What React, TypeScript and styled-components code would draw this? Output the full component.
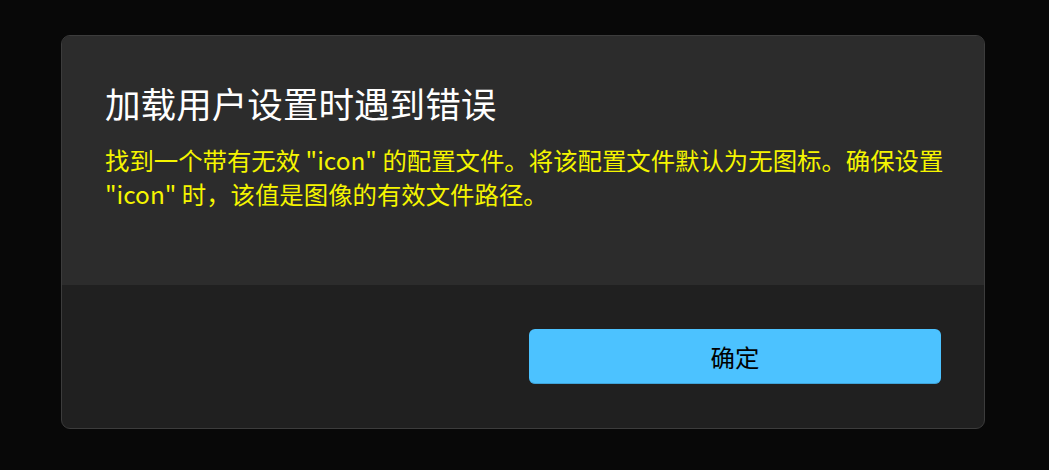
import styled, { createGlobalStyle } from "styled-components";

const GlobalStyle = createGlobalStyle`
  html, body {
    margin: 0;
    padding: 0;
    background: #080808;
  }
  body {
    font-family: "Noto Sans CJK SC", "Noto Sans", sans-serif;
  }
`;

const Page = styled.div`
  width: 1049px;
  height: 470px;
  padding: 35px 0 0 61px;
  box-sizing: border-box;
`;

const Dialog = styled.div`
  width: 924px;
  height: 394px;
  box-sizing: border-box;
  border: 1px solid #3c3c3c;
  border-radius: 9px;
  overflow: hidden;
  display: flex;
  flex-direction: column;
  background: #202020;
`;

const Body = styled.div`
  height: 250px;
  background: #2c2c2c;
  padding: 42px 36px 0 43px;
  box-sizing: border-box;
`;

const Title = styled.h1`
  margin: 0;
  font-size: 35.6px;
  font-weight: 400;
  line-height: 50px;
  color: #ffffff;
`;

const Message = styled.p`
  margin: 15px 0 0 0;
  font-size: 24.4px;
  line-height: 34px;
  color: #f5f500;
`;

const Footer = styled.div`
  flex: 1;
  display: grid;
  grid-template-columns: 1fr 1fr;
  column-gap: 12px;
  padding: 44px 43px;
  box-sizing: border-box;
  align-items: start;
`;

const PrimaryButton = styled.button`
  grid-column: 2;
  height: 55px;
  border: none;
  border-bottom: 1px solid #3fa3d8;
  border-radius: 6px;
  background: #4cc2ff;
  color: #000000;
  font-family: "Noto Sans CJK SC", "Noto Sans", sans-serif;
  font-size: 24.4px;
  cursor: pointer;
`;

export default function App() {
  return (
    <Page>
      <GlobalStyle />
      <Dialog>
        <Body>
          <Title>加载用户设置时遇到错误</Title>
          <Message>
            找到一个带有无效 "icon" 的配置文件。将该配置文件默认为无图标。确保设置 "icon"
            时，该值是图像的有效文件路径。
          </Message>
        </Body>
        <Footer>
          <PrimaryButton>确定</PrimaryButton>
        </Footer>
      </Dialog>
    </Page>
  );
}
